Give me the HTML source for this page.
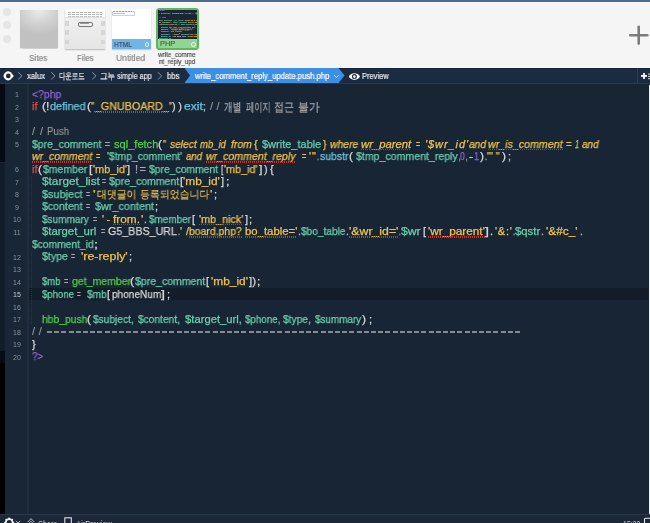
<!DOCTYPE html>
<html lang="ko"><head><meta charset="utf-8">
<style>
html,body{margin:0;padding:0;}
body{width:650px;height:523px;overflow:hidden;position:relative;background:#172535;font-family:"Liberation Sans",sans-serif;}
.abs{position:absolute;}
#desk{left:0;top:0;width:650px;height:2px;background:#4b6a8f;}
#tb{left:0;top:2px;width:650px;height:66px;background:#f5f5f5;}
.dot{position:absolute;left:3px;width:8px;height:8px;border-radius:50%;background:#e5e5e5;}
.lbl{position:absolute;font-size:9.5px;color:#8a8a8a;text-align:center;white-space:nowrap;}
#crumb{left:0;top:68px;width:650px;height:15px;background:#1b2b40;border-bottom:1px solid #2a3a4d;}
.cr{position:absolute;top:70px;font-size:9.5px;color:#e6e9ee;white-space:nowrap;line-height:12px;}
#editor{left:0;top:84px;width:650px;height:430px;background:#172535;}
#blk{left:0;top:84px;width:4.8px;height:430px;background:linear-gradient(180deg,#060b13 0,#060b13 77.6px,#1a2431 77.6px,#1a2431 79px,#121d2a 79px,#121d2a 267px,#070c14 267px,#070c14 279px,#000 279px);}
#gut{left:5px;top:84px;width:22px;height:430px;background:#182636;}
#gsep{left:27px;top:84px;width:2px;height:430px;background:#1f2d3e;}
.guide{position:absolute;left:31px;width:1px;background:repeating-linear-gradient(180deg,#22364c 0 1px,transparent 1px 2px);}
#hl{left:29px;top:288.2px;width:619px;height:12px;background:#121d29;}
#rstrip{left:648.5px;top:85px;width:1.5px;height:429px;background:#f2f2f2;}
#status{left:0;top:514px;width:650px;height:9px;background:#1c2838;border-top:1px solid #2a3849;}
.fit{position:absolute;line-height:1;white-space:pre;transform-origin:0 0;will-change:transform;}
.k{position:absolute;will-change:transform;font-size:11px;-webkit-text-stroke:0.25px currentColor;line-height:1;white-space:pre;transform-origin:0 0;}
.ul{position:absolute;height:1.5px;background:repeating-linear-gradient(90deg,#c8342c 0 1.2px,transparent 1.2px 2px);}
.ln{position:absolute;left:5px;width:24px;text-align:center;font-size:7px;line-height:1;}
.dash{position:absolute;top:331px;width:5px;height:1.6px;background:#868b91;}
</style></head><body>
<div id="desk" class="abs"></div>
<div id="tb" class="abs"></div>
<div class="abs" style="left:0;top:2px;width:650px;height:1px;background:#f8f8f8;"></div>
<div class="dot" style="top:8px"></div>
<div class="dot" style="top:21px"></div>
<div class="dot" style="top:34.5px"></div>
<!-- Sites -->
<div class="abs" style="left:20px;top:10px;width:38px;height:38px;background:radial-gradient(ellipse 75% 65% at 50% 0%,#ebebeb 0%,#d2d2d2 55%,#c1c1c1 100%) #c1c1c1;box-shadow:0 0.5px 1px rgba(0,0,0,0.15);"></div>
<!-- Files -->
<div class="abs" style="left:65.4px;top:9px;width:39.5px;height:39.6px;background:linear-gradient(#f3f3f3,#e5e5e5);box-shadow:0 0.6px 1.2px rgba(0,0,0,0.25);"></div>
<div class="abs" style="left:65.4px;top:9px;width:39.5px;height:8px;background:#ffffff;border-bottom:0.6px solid #e0e0e0;"></div>
<div class="abs" style="left:67.8px;top:11.8px;width:34px;height:0.9px;background:repeating-linear-gradient(90deg,#b8b8b8 0 3px,#e8e8e8 3px 4px);"></div>
<div class="abs" style="left:67.8px;top:13.9px;width:34px;height:0.9px;background:repeating-linear-gradient(90deg,#b8b8b8 0 3px,#e8e8e8 3px 4px);"></div>
<div class="abs" style="left:67.8px;top:16px;width:34px;height:0.9px;background:repeating-linear-gradient(90deg,#c4c4c4 0 3px,#ececec 3px 4px);"></div>
<div class="abs" style="left:78px;top:22px;width:12.6px;height:3.2px;border:0.7px solid #7a7a7a;border-radius:2px;background:#f0f0f0;box-shadow:0 0 1px rgba(0,0,0,0.2);"></div>
<div class="abs" style="left:80px;top:23.4px;width:9px;height:0.8px;background:#9a9a9a;"></div>
<div class="abs" style="left:65.4px;top:21.2px;width:3.7px;height:4.5px;background:#d6d6d6;"></div>
<div class="abs" style="left:65.4px;top:30.2px;width:3.7px;height:4.4px;background:#d6d6d6;"></div>
<div class="abs" style="left:65.4px;top:39.6px;width:3.7px;height:4.2px;background:#d6d6d6;"></div>
<div class="abs" style="left:101.2px;top:21.2px;width:3.7px;height:4.5px;background:#d6d6d6;"></div>
<div class="abs" style="left:101.2px;top:30.2px;width:3.7px;height:4.4px;background:#d6d6d6;"></div>
<div class="abs" style="left:101.2px;top:39.6px;width:3.7px;height:4.2px;background:#d6d6d6;"></div>
<!-- Untitled -->
<div class="abs" style="left:111.6px;top:9px;width:39.4px;height:39.6px;background:#ffffff;box-shadow:0 0.6px 1.2px rgba(0,0,0,0.2);"></div>
<div class="abs" style="left:112.2px;top:10.6px;width:21px;height:3.6px;border:0.5px solid #cfcff2;background:#fbfbff;"></div>
<div class="abs" style="left:113px;top:11.2px;width:19px;height:0.6px;background:repeating-linear-gradient(90deg,#8a8a9a 0 2px,transparent 2px 3px);opacity:0.7"></div>
<div class="abs" style="left:113px;top:12.6px;width:12px;height:0.6px;background:#9a9aaa;opacity:0.6"></div>
<div class="abs" style="left:111.6px;top:39.1px;width:39.4px;height:9.5px;background:#71b5e8;"></div>
<div class="abs" style="left:113.8px;top:40.6px;font-size:7.6px;color:#34495e;line-height:8px;transform:scaleX(0.87);transform-origin:0 0;-webkit-text-stroke:0.15px #34495e;">HTML</div>
<div class="abs" style="left:144.6px;top:42.2px;width:2.8px;height:2.8px;border:0.8px solid #e4f1fb;border-radius:50%;"></div>
<!-- PHP -->
<div class="abs" style="left:156.2px;top:7.6px;width:38.6px;height:38.6px;border:2px solid #5cb85c;border-radius:3.5px;background:#92d492;"></div>
<div class="abs" style="left:158px;top:9.5px;width:38.5px;height:29.8px;background:#1a2535;overflow:hidden;"><div style="position:absolute;left:-5.5px;top:-17px;width:650px;height:523px;transform:scale(0.187);transform-origin:0 0;"><span class="k kt" style="left:32.2px;top:88.64px;color:#8e66d8;transform:scaleX(0.9480);-webkit-text-stroke:0.6px #8e66d8;opacity:0.85;">&lt;?php</span>
<span class="k kt" style="left:32.4px;top:101.14px;color:#e8493c;transform:scaleX(1.0182);-webkit-text-stroke:0.6px #e8493c;opacity:0.85;">if</span>
<span class="k kt" style="left:41.5px;top:101.14px;color:#d8d8d8;transform:scaleX(1.1137);-webkit-text-stroke:0.6px #d8d8d8;opacity:0.85;">(!</span>
<span class="k kt" style="left:50.2px;top:101.14px;color:#6cc6df;transform:scaleX(0.9863);-webkit-text-stroke:0.6px #6cc6df;opacity:0.85;">defined</span>
<span class="k kt" style="left:87.0px;top:101.14px;color:#d8d8d8;transform:scaleX(1.0894);-webkit-text-stroke:0.6px #d8d8d8;opacity:0.85;">(</span>
<span class="k kt" style="left:90.8px;top:101.14px;color:#f0c34f;transform:scaleX(0.8192);-webkit-text-stroke:0.6px #f0c34f;opacity:0.85;">"</span>
<span class="k kt" style="left:94.5px;top:101.14px;color:#f0c34f;transform:scaleX(0.9737);-webkit-text-stroke:0.6px #f0c34f;opacity:0.85;">_GNUBOARD_</span>
<span class="k kt" style="left:169.0px;top:101.14px;color:#f0c34f;transform:scaleX(0.7680);-webkit-text-stroke:0.6px #f0c34f;opacity:0.85;">"</span>
<span class="k kt" style="left:172.0px;top:101.14px;color:#d8d8d8;letter-spacing:2.47px;-webkit-text-stroke:0.6px #d8d8d8;opacity:0.85;">))</span>
<span class="k kt" style="left:184.3px;top:101.14px;color:#6cc6df;transform:scaleX(1.0997);-webkit-text-stroke:0.6px #6cc6df;opacity:0.85;">exit;</span>
<span class="k kt" style="left:210.0px;top:101.14px;color:#9a9a9a;letter-spacing:3.38px;-webkit-text-stroke:0.6px #9a9a9a;opacity:0.85;">//</span>
<span class="k kt" style="left:223.7px;top:101.14px;color:#9a9a9a;transform:scaleX(0.7208);-webkit-text-stroke:0.6px #9a9a9a;opacity:0.85;">개별</span>
<span class="k kt" style="left:245.8px;top:101.14px;color:#9a9a9a;transform:scaleX(0.6861);-webkit-text-stroke:0.6px #9a9a9a;opacity:0.85;">페이지</span>
<span class="k kt" style="left:274.0px;top:101.14px;color:#9a9a9a;transform:scaleX(0.8333);-webkit-text-stroke:0.6px #9a9a9a;opacity:0.85;">접근</span>
<span class="k kt" style="left:298.0px;top:101.14px;color:#9a9a9a;transform:scaleX(0.9042);-webkit-text-stroke:0.6px #9a9a9a;opacity:0.85;">불가</span>
<span class="k kt" style="left:31.7px;top:126.14px;color:#9a9a9a;letter-spacing:4.97px;-webkit-text-stroke:0.6px #9a9a9a;opacity:0.85;">//</span>
<span class="k kt" style="left:46.5px;top:126.14px;color:#9a9a9a;transform:scaleX(0.8812);-webkit-text-stroke:0.6px #9a9a9a;opacity:0.85;">Push</span>
<span class="k kt" style="left:31.7px;top:138.64px;color:#6ccfae;transform:scaleX(0.9472);-webkit-text-stroke:0.6px #6ccfae;opacity:0.85;">$pre_comment</span>
<span class="k kt" style="left:104.9px;top:138.64px;color:#a9abb8;transform:scaleX(0.7922);-webkit-text-stroke:0.6px #a9abb8;opacity:0.85;">=</span>
<span class="k kt" style="left:113.5px;top:138.64px;color:#52cf4a;transform:scaleX(1.0061);-webkit-text-stroke:0.6px #52cf4a;opacity:0.85;">sql_fetch</span>
<span class="k kt" style="left:158.0px;top:138.64px;color:#d8d8d8;transform:scaleX(1.0894);-webkit-text-stroke:0.6px #d8d8d8;opacity:0.85;">(</span>
<span class="k kt" style="left:162.8px;top:138.64px;color:#f0c34f;transform:scaleX(0.8192);-webkit-text-stroke:0.6px #f0c34f;opacity:0.85;">"</span>
<span class="k kt" style="left:170.0px;top:138.64px;color:#f0c34f;transform:scaleX(0.9287);font-style:italic;-webkit-text-stroke:0.6px #f0c34f;opacity:0.85;">select</span>
<span class="k kt" style="left:199.7px;top:138.64px;color:#f0c34f;transform:scaleX(0.8609);font-style:italic;-webkit-text-stroke:0.6px #f0c34f;opacity:0.85;">mb_id</span>
<span class="k kt" style="left:230.5px;top:138.64px;color:#f0c34f;transform:scaleX(0.9500);font-style:italic;-webkit-text-stroke:0.6px #f0c34f;opacity:0.85;">from</span>
<span class="k kt" style="left:254.4px;top:138.64px;color:#f0c34f;transform:scaleX(0.9763);-webkit-text-stroke:0.6px #f0c34f;opacity:0.85;">{</span>
<span class="k kt" style="left:262.3px;top:138.64px;color:#6ccfae;transform:scaleX(0.9962);-webkit-text-stroke:0.6px #6ccfae;opacity:0.85;">$write_table</span>
<span class="k kt" style="left:322.6px;top:138.64px;color:#f0c34f;transform:scaleX(0.9220);-webkit-text-stroke:0.6px #f0c34f;opacity:0.85;">}</span>
<span class="k kt" style="left:330.0px;top:138.64px;color:#f0c34f;transform:scaleX(0.9443);font-style:italic;-webkit-text-stroke:0.6px #f0c34f;opacity:0.85;">where</span>
<span class="k kt" style="left:360.8px;top:138.64px;color:#f0c34f;transform:scaleX(1.0261);font-style:italic;-webkit-text-stroke:0.6px #f0c34f;opacity:0.85;">wr_parent</span>
<span class="k kt" style="left:416.0px;top:138.64px;color:#f0c34f;transform:scaleX(0.6214);-webkit-text-stroke:0.6px #f0c34f;opacity:0.85;">=</span>
<span class="k kt" style="left:424.6px;top:138.64px;color:#f0c34f;letter-spacing:0.93px;font-style:italic;-webkit-text-stroke:0.6px #f0c34f;opacity:0.85;">'$wr_id'</span>
<span class="k kt" style="left:469.0px;top:138.64px;color:#f0c34f;transform:scaleX(0.9260);font-style:italic;-webkit-text-stroke:0.6px #f0c34f;opacity:0.85;">and</span>
<span class="k kt" style="left:488.0px;top:138.64px;color:#f0c34f;transform:scaleX(0.9684);font-style:italic;-webkit-text-stroke:0.6px #f0c34f;opacity:0.85;">wr_is_comment</span>
<span class="k kt" style="left:566.0px;top:138.64px;color:#f0c34f;transform:scaleX(0.9320);-webkit-text-stroke:0.6px #f0c34f;opacity:0.85;">=</span>
<span class="k kt" style="left:575.0px;top:138.64px;color:#f0c34f;transform:scaleX(0.6531);font-style:italic;-webkit-text-stroke:0.6px #f0c34f;opacity:0.85;">1</span>
<span class="k kt" style="left:581.6px;top:138.64px;color:#f0c34f;transform:scaleX(0.9096);font-style:italic;-webkit-text-stroke:0.6px #f0c34f;opacity:0.85;">and</span>
<span class="k kt" style="left:31.7px;top:151.14px;color:#f0c34f;transform:scaleX(0.9576);font-style:italic;-webkit-text-stroke:0.6px #f0c34f;opacity:0.85;">wr_comment</span>
<span class="k kt" style="left:95.7px;top:151.14px;color:#f0c34f;transform:scaleX(0.6680);-webkit-text-stroke:0.6px #f0c34f;opacity:0.85;">=</span>
<span class="k kt" style="left:107.4px;top:151.14px;color:#6ccfae;transform:scaleX(0.9386);-webkit-text-stroke:0.6px #6ccfae;opacity:0.85;">'$tmp_comment'</span>
<span class="k kt" style="left:186.0px;top:151.14px;color:#f0c34f;transform:scaleX(0.8715);font-style:italic;-webkit-text-stroke:0.6px #f0c34f;opacity:0.85;">and</span>
<span class="k kt" style="left:206.0px;top:151.14px;color:#f0c34f;transform:scaleX(0.9632);font-style:italic;-webkit-text-stroke:0.6px #f0c34f;opacity:0.85;">wr_comment_reply</span>
<span class="k kt" style="left:301.7px;top:151.14px;color:#f0c34f;transform:scaleX(0.6680);-webkit-text-stroke:0.6px #f0c34f;opacity:0.85;">=</span>
<span class="k kt" style="left:309.0px;top:151.14px;color:#f0c34f;letter-spacing:0.98px;-webkit-text-stroke:0.6px #f0c34f;opacity:0.85;">'"</span>
<span class="k kt" style="left:317.0px;top:151.14px;color:#d8d8d8;transform:scaleX(0.6531);-webkit-text-stroke:0.6px #d8d8d8;opacity:0.85;">.</span>
<span class="k kt" style="left:320.0px;top:151.14px;color:#6cc6df;transform:scaleX(0.9510);-webkit-text-stroke:0.6px #6cc6df;opacity:0.85;">substr</span>
<span class="k kt" style="left:349.0px;top:151.14px;color:#d8d8d8;transform:scaleX(1.0894);-webkit-text-stroke:0.6px #d8d8d8;opacity:0.85;">(</span>
<span class="k kt" style="left:356.0px;top:151.14px;color:#6ccfae;transform:scaleX(0.9624);-webkit-text-stroke:0.6px #6ccfae;opacity:0.85;">$tmp_comment_reply</span>
<span class="k kt" style="left:458.5px;top:151.14px;color:#d8d8d8;transform:scaleX(0.4898);-webkit-text-stroke:0.6px #d8d8d8;opacity:0.85;">,</span>
<span class="k kt" style="left:460.3px;top:151.14px;color:#8e66d8;transform:scaleX(0.7673);-webkit-text-stroke:0.6px #8e66d8;opacity:0.85;">0</span>
<span class="k kt" style="left:465.5px;top:151.14px;color:#d8d8d8;transform:scaleX(0.4898);-webkit-text-stroke:0.6px #d8d8d8;opacity:0.85;">,</span>
<span class="k kt" style="left:469.0px;top:151.14px;color:#d8d8d8;transform:scaleX(1.0894);-webkit-text-stroke:0.6px #d8d8d8;opacity:0.85;">-</span>
<span class="k kt" style="left:473.8px;top:151.14px;color:#8e66d8;transform:scaleX(0.8163);-webkit-text-stroke:0.6px #8e66d8;opacity:0.85;">1</span>
<span class="k kt" style="left:480.0px;top:151.14px;color:#d8d8d8;transform:scaleX(1.0894);-webkit-text-stroke:0.6px #d8d8d8;opacity:0.85;">)</span>
<span class="k kt" style="left:485.0px;top:151.14px;color:#d8d8d8;transform:scaleX(0.6531);-webkit-text-stroke:0.6px #d8d8d8;opacity:0.85;">.</span>
<span class="k kt" style="left:487.4px;top:151.14px;color:#f0c34f;transform:scaleX(0.9716);-webkit-text-stroke:0.6px #f0c34f;opacity:0.85;">"' "</span>
<span class="k kt" style="left:502.0px;top:151.14px;color:#d8d8d8;transform:scaleX(1.0894);-webkit-text-stroke:0.6px #d8d8d8;opacity:0.85;">)</span>
<span class="k kt" style="left:508.3px;top:151.14px;color:#d8d8d8;transform:scaleX(0.8816);-webkit-text-stroke:0.6px #d8d8d8;opacity:0.85;">;</span>
<span class="k kt" style="left:32.4px;top:163.64px;color:#e8493c;transform:scaleX(1.0182);-webkit-text-stroke:0.6px #e8493c;opacity:0.85;">if</span>
<span class="k kt" style="left:38.0px;top:163.64px;color:#d8d8d8;transform:scaleX(1.0894);-webkit-text-stroke:0.6px #d8d8d8;opacity:0.85;">(</span>
<span class="k kt" style="left:42.8px;top:163.64px;color:#6ccfae;transform:scaleX(0.9512);-webkit-text-stroke:0.6px #6ccfae;opacity:0.85;">$member</span>
<span class="k kt" style="left:88.5px;top:163.64px;color:#d8d8d8;transform:scaleX(1.1429);-webkit-text-stroke:0.6px #d8d8d8;opacity:0.85;">[</span>
<span class="k kt" style="left:92.5px;top:163.64px;color:#f0c34f;transform:scaleX(0.9950);-webkit-text-stroke:0.6px #f0c34f;opacity:0.85;">'mb_id'</span>
<span class="k kt" style="left:127.0px;top:163.64px;color:#d8d8d8;transform:scaleX(0.9796);-webkit-text-stroke:0.6px #d8d8d8;opacity:0.85;">]</span>
<span class="k kt" style="left:134.5px;top:163.64px;color:#a9abb8;letter-spacing:1.52px;-webkit-text-stroke:0.6px #a9abb8;opacity:0.85;">!=</span>
<span class="k kt" style="left:149.0px;top:163.64px;color:#6ccfae;transform:scaleX(0.9404);-webkit-text-stroke:0.6px #6ccfae;opacity:0.85;">$pre_comment</span>
<span class="k kt" style="left:220.6px;top:163.64px;color:#d8d8d8;transform:scaleX(0.7837);-webkit-text-stroke:0.6px #d8d8d8;opacity:0.85;">[</span>
<span class="k kt" style="left:224.0px;top:163.64px;color:#f0c34f;transform:scaleX(0.9803);-webkit-text-stroke:0.6px #f0c34f;opacity:0.85;">'mb_id'</span>
<span class="k kt" style="left:258.5px;top:163.64px;color:#d8d8d8;transform:scaleX(1.1429);-webkit-text-stroke:0.6px #d8d8d8;opacity:0.85;">]</span>
<span class="k kt" style="left:263.5px;top:163.64px;color:#d8d8d8;transform:scaleX(0.9532);-webkit-text-stroke:0.6px #d8d8d8;opacity:0.85;">)</span>
<span class="k kt" style="left:269.7px;top:163.64px;color:#d8d8d8;transform:scaleX(1.0034);-webkit-text-stroke:0.6px #d8d8d8;opacity:0.85;">{</span>
<span class="k kt" style="left:41.5px;top:176.14px;color:#6ccfae;transform:scaleX(1.0760);-webkit-text-stroke:0.6px #6ccfae;opacity:0.85;">$target_list</span>
<span class="k kt" style="left:102.0px;top:176.14px;color:#a9abb8;transform:scaleX(0.6214);-webkit-text-stroke:0.6px #a9abb8;opacity:0.85;">=</span>
<span class="k kt" style="left:109.3px;top:176.14px;color:#6ccfae;transform:scaleX(0.9567);-webkit-text-stroke:0.6px #6ccfae;opacity:0.85;">$pre_comment</span>
<span class="k kt" style="left:179.7px;top:176.14px;color:#d8d8d8;transform:scaleX(1.0776);-webkit-text-stroke:0.6px #d8d8d8;opacity:0.85;">[</span>
<span class="k kt" style="left:183.4px;top:176.14px;color:#f0c34f;transform:scaleX(1.0798);-webkit-text-stroke:0.6px #f0c34f;opacity:0.85;">'mb_id'</span>
<span class="k kt" style="left:221.0px;top:176.14px;color:#d8d8d8;transform:scaleX(0.9796);-webkit-text-stroke:0.6px #d8d8d8;opacity:0.85;">]</span>
<span class="k kt" style="left:225.5px;top:176.14px;color:#d8d8d8;transform:scaleX(1.1429);-webkit-text-stroke:0.6px #d8d8d8;opacity:0.85;">;</span>
<span class="k kt" style="left:41.5px;top:188.64px;color:#6ccfae;transform:scaleX(0.9882);-webkit-text-stroke:0.6px #6ccfae;opacity:0.85;">$subject</span>
<span class="k kt" style="left:86.0px;top:188.64px;color:#a9abb8;transform:scaleX(0.6214);-webkit-text-stroke:0.6px #a9abb8;opacity:0.85;">=</span>
<span class="k kt" style="left:93.3px;top:188.64px;color:#f0c34f;transform:scaleX(1.2800);-webkit-text-stroke:0.6px #f0c34f;opacity:0.85;">'</span>
<span class="k kt" style="left:97.0px;top:188.64px;color:#f0c34f;transform:scaleX(0.8955);-webkit-text-stroke:0.6px #f0c34f;opacity:0.85;">대댓글이</span>
<span class="k kt" style="left:140.0px;top:188.64px;color:#f0c34f;transform:scaleX(0.9000);-webkit-text-stroke:0.6px #f0c34f;opacity:0.85;">등록되었습니다</span>
<span class="k kt" style="left:210.0px;top:188.64px;color:#f0c34f;transform:scaleX(1.1852);-webkit-text-stroke:0.6px #f0c34f;opacity:0.85;">'</span>
<span class="k kt" style="left:214.0px;top:188.64px;color:#d8d8d8;transform:scaleX(0.9796);-webkit-text-stroke:0.6px #d8d8d8;opacity:0.85;">;</span>
<span class="k kt" style="left:41.5px;top:201.14px;color:#6ccfae;transform:scaleX(0.9596);-webkit-text-stroke:0.6px #6ccfae;opacity:0.85;">$content</span>
<span class="k kt" style="left:86.0px;top:201.14px;color:#a9abb8;transform:scaleX(0.6214);-webkit-text-stroke:0.6px #a9abb8;opacity:0.85;">=</span>
<span class="k kt" style="left:94.5px;top:201.14px;color:#6ccfae;transform:scaleX(0.9860);-webkit-text-stroke:0.6px #6ccfae;opacity:0.85;">$wr_content</span>
<span class="k kt" style="left:155.0px;top:201.14px;color:#d8d8d8;transform:scaleX(0.9796);-webkit-text-stroke:0.6px #d8d8d8;opacity:0.85;">;</span>
<span class="k kt" style="left:41.5px;top:213.64px;color:#6ccfae;transform:scaleX(0.9115);-webkit-text-stroke:0.6px #6ccfae;opacity:0.85;">$summary</span>
<span class="k kt" style="left:92.5px;top:213.64px;color:#a9abb8;transform:scaleX(0.6680);-webkit-text-stroke:0.6px #a9abb8;opacity:0.85;">=</span>
<span class="k kt" style="left:101.9px;top:213.64px;color:#f0c34f;letter-spacing:2.33px;-webkit-text-stroke:0.6px #f0c34f;opacity:0.85;">'-</span>
<span class="k kt" style="left:113.0px;top:213.64px;color:#f0c34f;transform:scaleX(1.0773);-webkit-text-stroke:0.6px #f0c34f;opacity:0.85;">from.</span>
<span class="k kt" style="left:140.5px;top:213.64px;color:#f0c34f;transform:scaleX(1.1852);-webkit-text-stroke:0.6px #f0c34f;opacity:0.85;">'</span>
<span class="k kt" style="left:144.0px;top:213.64px;color:#d8d8d8;transform:scaleX(0.8163);-webkit-text-stroke:0.6px #d8d8d8;opacity:0.85;">.</span>
<span class="k kt" style="left:148.6px;top:213.64px;color:#6ccfae;transform:scaleX(0.9017);-webkit-text-stroke:0.6px #6ccfae;opacity:0.85;">$member</span>
<span class="k kt" style="left:192.0px;top:213.64px;color:#d8d8d8;transform:scaleX(0.9796);-webkit-text-stroke:0.6px #d8d8d8;opacity:0.85;">[</span>
<span class="k kt" style="left:199.0px;top:213.64px;color:#f0c34f;transform:scaleX(0.9829);-webkit-text-stroke:0.6px #f0c34f;opacity:0.85;">'mb_nick'</span>
<span class="k kt" style="left:245.0px;top:213.64px;color:#d8d8d8;transform:scaleX(0.9796);-webkit-text-stroke:0.6px #d8d8d8;opacity:0.85;">]</span>
<span class="k kt" style="left:248.9px;top:213.64px;color:#d8d8d8;transform:scaleX(1.0122);-webkit-text-stroke:0.6px #d8d8d8;opacity:0.85;">;</span>
<span class="k kt" style="left:41.5px;top:226.14px;color:#6ccfae;transform:scaleX(1.0305);-webkit-text-stroke:0.6px #6ccfae;opacity:0.85;">$target_url</span>
<span class="k kt" style="left:100.6px;top:226.14px;color:#a9abb8;transform:scaleX(0.6835);-webkit-text-stroke:0.6px #a9abb8;opacity:0.85;">=</span>
<span class="k kt" style="left:108.0px;top:226.14px;color:#d8d8d8;transform:scaleX(0.9727);-webkit-text-stroke:0.6px #d8d8d8;opacity:0.85;">G5_BBS_URL</span>
<span class="k kt" style="left:177.5px;top:226.14px;color:#d8d8d8;transform:scaleX(0.6531);-webkit-text-stroke:0.6px #d8d8d8;opacity:0.85;">.</span>
<span class="k kt" style="left:180.0px;top:226.14px;color:#f0c34f;letter-spacing:3.84px;-webkit-text-stroke:0.6px #f0c34f;opacity:0.85;">'/</span>
<span class="k kt" style="left:189.2px;top:226.14px;color:#f0c34f;transform:scaleX(0.9484);-webkit-text-stroke:0.6px #f0c34f;opacity:0.85;">board.php?</span>
<span class="k kt" style="left:244.6px;top:226.14px;color:#f0c34f;transform:scaleX(1.0328);-webkit-text-stroke:0.6px #f0c34f;opacity:0.85;">bo_table='</span>
<span class="k kt" style="left:297.5px;top:226.14px;color:#d8d8d8;transform:scaleX(0.8163);-webkit-text-stroke:0.6px #d8d8d8;opacity:0.85;">.</span>
<span class="k kt" style="left:301.0px;top:226.14px;color:#6ccfae;transform:scaleX(0.9187);-webkit-text-stroke:0.6px #6ccfae;opacity:0.85;">$bo_table</span>
<span class="k kt" style="left:346.0px;top:226.14px;color:#d8d8d8;transform:scaleX(0.8163);-webkit-text-stroke:0.6px #d8d8d8;opacity:0.85;">.</span>
<span class="k kt" style="left:349.0px;top:226.14px;color:#f0c34f;transform:scaleX(1.1164);-webkit-text-stroke:0.6px #f0c34f;opacity:0.85;">'&amp;wr_id='</span>
<span class="k kt" style="left:398.8px;top:226.14px;color:#d8d8d8;transform:scaleX(0.5551);-webkit-text-stroke:0.6px #d8d8d8;opacity:0.85;">.</span>
<span class="k kt" style="left:400.8px;top:226.14px;color:#6ccfae;transform:scaleX(1.1108);-webkit-text-stroke:0.6px #6ccfae;opacity:0.85;">$wr</span>
<span class="k kt" style="left:423.0px;top:226.14px;color:#d8d8d8;transform:scaleX(0.9796);-webkit-text-stroke:0.6px #d8d8d8;opacity:0.85;">[</span>
<span class="k kt" style="left:427.7px;top:226.14px;color:#f0c34f;transform:scaleX(1.0711);-webkit-text-stroke:0.6px #f0c34f;opacity:0.85;">'wr_parent'</span>
<span class="k kt" style="left:485.0px;top:226.14px;color:#d8d8d8;transform:scaleX(1.3061);-webkit-text-stroke:0.6px #d8d8d8;opacity:0.85;">]</span>
<span class="k kt" style="left:490.0px;top:226.14px;color:#d8d8d8;transform:scaleX(0.9796);-webkit-text-stroke:0.6px #d8d8d8;opacity:0.85;">.</span>
<span class="k kt" style="left:495.4px;top:226.14px;color:#f0c34f;letter-spacing:0.77px;-webkit-text-stroke:0.6px #f0c34f;opacity:0.85;">'&amp;:'</span>
<span class="k kt" style="left:512.5px;top:226.14px;color:#d8d8d8;transform:scaleX(0.6531);-webkit-text-stroke:0.6px #d8d8d8;opacity:0.85;">.</span>
<span class="k kt" style="left:514.8px;top:226.14px;color:#6ccfae;transform:scaleX(1.0299);-webkit-text-stroke:0.6px #6ccfae;opacity:0.85;">$qstr</span>
<span class="k kt" style="left:540.5px;top:226.14px;color:#d8d8d8;transform:scaleX(0.8163);-webkit-text-stroke:0.6px #d8d8d8;opacity:0.85;">.</span>
<span class="k kt" style="left:545.5px;top:226.14px;color:#f0c34f;transform:scaleX(1.0758);-webkit-text-stroke:0.6px #f0c34f;opacity:0.85;">'&amp;#c_'</span>
<span class="k kt" style="left:579.5px;top:226.14px;color:#d8d8d8;transform:scaleX(0.8163);-webkit-text-stroke:0.6px #d8d8d8;opacity:0.85;">.</span>
<span class="k kt" style="left:31.7px;top:238.64px;color:#6ccfae;transform:scaleX(0.9327);-webkit-text-stroke:0.6px #6ccfae;opacity:0.85;">$comment_id</span>
<span class="k kt" style="left:94.0px;top:238.64px;color:#d8d8d8;transform:scaleX(1.3061);-webkit-text-stroke:0.6px #d8d8d8;opacity:0.85;">;</span>
<span class="k kt" style="left:41.5px;top:251.15px;color:#6ccfae;transform:scaleX(0.9620);-webkit-text-stroke:0.6px #6ccfae;opacity:0.85;">$type</span>
<span class="k kt" style="left:71.0px;top:251.15px;color:#a9abb8;transform:scaleX(0.6214);-webkit-text-stroke:0.6px #a9abb8;opacity:0.85;">=</span>
<span class="k kt" style="left:81.0px;top:251.15px;color:#f0c34f;transform:scaleX(1.1253);-webkit-text-stroke:0.6px #f0c34f;opacity:0.85;">'re-reply'</span>
<span class="k kt" style="left:129.0px;top:251.15px;color:#d8d8d8;transform:scaleX(0.9796);-webkit-text-stroke:0.6px #d8d8d8;opacity:0.85;">;</span>
<span class="k kt" style="left:41.5px;top:276.15px;color:#6ccfae;transform:scaleX(0.8642);-webkit-text-stroke:0.6px #6ccfae;opacity:0.85;">$mb</span>
<span class="k kt" style="left:63.7px;top:276.15px;color:#a9abb8;transform:scaleX(0.6680);-webkit-text-stroke:0.6px #a9abb8;opacity:0.85;">=</span>
<span class="k kt" style="left:72.3px;top:276.15px;color:#52cf4a;transform:scaleX(0.9568);-webkit-text-stroke:0.6px #52cf4a;opacity:0.85;">get_member</span>
<span class="k kt" style="left:129.8px;top:276.15px;color:#d8d8d8;transform:scaleX(1.1438);-webkit-text-stroke:0.6px #d8d8d8;opacity:0.85;">(</span>
<span class="k kt" style="left:134.8px;top:276.15px;color:#6ccfae;transform:scaleX(0.9567);-webkit-text-stroke:0.6px #6ccfae;opacity:0.85;">$pre_comment</span>
<span class="k kt" style="left:206.0px;top:276.15px;color:#d8d8d8;transform:scaleX(0.9796);-webkit-text-stroke:0.6px #d8d8d8;opacity:0.85;">[</span>
<span class="k kt" style="left:211.0px;top:276.15px;color:#f0c34f;transform:scaleX(1.0828);-webkit-text-stroke:0.6px #f0c34f;opacity:0.85;">'mb_id'</span>
<span class="k kt" style="left:249.0px;top:276.15px;color:#d8d8d8;transform:scaleX(1.0394);-webkit-text-stroke:0.6px #d8d8d8;opacity:0.85;">])</span>
<span class="k kt" style="left:256.7px;top:276.15px;color:#d8d8d8;transform:scaleX(1.0776);-webkit-text-stroke:0.6px #d8d8d8;opacity:0.85;">;</span>
<span class="k kt" style="left:41.5px;top:288.65px;color:#6ccfae;transform:scaleX(0.8715);-webkit-text-stroke:0.6px #6ccfae;opacity:0.85;">$phone</span>
<span class="k kt" style="left:77.2px;top:288.65px;color:#a9abb8;transform:scaleX(0.5903);-webkit-text-stroke:0.6px #a9abb8;opacity:0.85;">=</span>
<span class="k kt" style="left:87.0px;top:288.65px;color:#6ccfae;transform:scaleX(0.9250);-webkit-text-stroke:0.6px #6ccfae;opacity:0.85;">$mb</span>
<span class="k kt" style="left:107.0px;top:288.65px;color:#d8d8d8;transform:scaleX(0.9796);-webkit-text-stroke:0.6px #d8d8d8;opacity:0.85;">[</span>
<span class="k kt" style="left:111.7px;top:288.65px;color:#d8d8d8;transform:scaleX(0.9159);-webkit-text-stroke:0.6px #d8d8d8;opacity:0.85;">phoneNum</span>
<span class="k kt" style="left:161.0px;top:288.65px;color:#d8d8d8;transform:scaleX(1.3061);-webkit-text-stroke:0.6px #d8d8d8;opacity:0.85;">]</span>
<span class="k kt" style="left:167.0px;top:288.65px;color:#d8d8d8;transform:scaleX(0.9796);-webkit-text-stroke:0.6px #d8d8d8;opacity:0.85;">;</span>
<span class="k kt" style="left:41.5px;top:313.65px;color:#52cf4a;transform:scaleX(0.9415);-webkit-text-stroke:0.6px #52cf4a;opacity:0.85;">hbb_push</span>
<span class="k kt" style="left:87.0px;top:313.65px;color:#d8d8d8;transform:scaleX(1.0894);-webkit-text-stroke:0.6px #d8d8d8;opacity:0.85;">(</span>
<span class="k kt" style="left:93.3px;top:313.65px;color:#6ccfae;transform:scaleX(0.9243);-webkit-text-stroke:0.6px #6ccfae;opacity:0.85;">$subject,</span>
<span class="k kt" style="left:137.6px;top:313.65px;color:#6ccfae;transform:scaleX(0.9256);-webkit-text-stroke:0.6px #6ccfae;opacity:0.85;">$content,</span>
<span class="k kt" style="left:184.6px;top:313.65px;color:#6ccfae;transform:scaleX(1.0223);-webkit-text-stroke:0.6px #6ccfae;opacity:0.85;">$target_url,</span>
<span class="k kt" style="left:244.6px;top:313.65px;color:#6ccfae;transform:scaleX(0.8902);-webkit-text-stroke:0.6px #6ccfae;opacity:0.85;">$phone,</span>
<span class="k kt" style="left:283.0px;top:313.65px;color:#6ccfae;transform:scaleX(0.9276);-webkit-text-stroke:0.6px #6ccfae;opacity:0.85;">$type,</span>
<span class="k kt" style="left:315.4px;top:313.65px;color:#6ccfae;transform:scaleX(0.8979);-webkit-text-stroke:0.6px #6ccfae;opacity:0.85;">$summary</span>
<span class="k kt" style="left:362.0px;top:313.65px;color:#d8d8d8;transform:scaleX(1.0894);-webkit-text-stroke:0.6px #d8d8d8;opacity:0.85;">)</span>
<span class="k kt" style="left:369.0px;top:313.65px;color:#d8d8d8;transform:scaleX(0.9796);-webkit-text-stroke:0.6px #d8d8d8;opacity:0.85;">;</span>
<span class="k kt" style="left:31.7px;top:326.15px;color:#9a9a9a;letter-spacing:3.68px;-webkit-text-stroke:0.6px #9a9a9a;opacity:0.85;">//</span>
<span class="k kt" style="left:31.7px;top:338.65px;color:#d8d8d8;transform:scaleX(1.0034);-webkit-text-stroke:0.6px #d8d8d8;opacity:0.85;">}</span>
<span class="k kt" style="left:31.7px;top:351.15px;color:#8e66d8;transform:scaleX(0.8847);-webkit-text-stroke:0.6px #8e66d8;opacity:0.85;">?&gt;</span></div></div>
<div class="abs" style="left:159.7px;top:40.3px;font-size:7.8px;color:#42603f;line-height:8px;transform:scaleX(0.95);transform-origin:0 0;-webkit-text-stroke:0.15px #42603f;">PHP</div>
<div class="abs" style="left:191px;top:42.3px;width:2.8px;height:2.8px;border:0.8px solid #f0faf0;border-radius:50%;"></div>
<!-- plus -->
<svg class="abs" style="left:620px;top:18px" width="30" height="32" viewBox="620 18 30 32"><g stroke="#7b7b7b" stroke-width="2.6" stroke-linecap="round"><line x1="630.3" y1="35.3" x2="647.3" y2="35.3"/><line x1="638.7" y1="26.8" x2="638.7" y2="43.6"/></g></svg>

<!-- breadcrumb -->
<div id="crumb" class="abs"></div>
<div class="abs" style="left:0;top:66px;width:650px;height:1.6px;background:#f6f6f6;"></div>
<div class="abs" style="left:0;top:68px;width:650px;height:1px;background:#16223a;opacity:0.9"></div>
<div class="abs" style="left:184.5px;top:68px;width:160px;height:15px;background:#3d8fe3;clip-path:polygon(0 0,154px 0,160px 7.5px,154px 15px,0 15px,5.5px 7.5px);"></div>
<span class="fit" style="left:26.8px;top:71.50px;font-size:8.6px;color:#e8ebef;-webkit-text-stroke:0.2px #e8ebef;transform:scaleX(0.9022);">xalux</span>
<span class="fit" style="left:59.4px;top:71.50px;font-size:8.6px;color:#e8ebef;-webkit-text-stroke:0.2px #e8ebef;transform:scaleX(0.7111);">다운로드</span>
<span class="fit" style="left:99.7px;top:71.50px;font-size:8.6px;color:#e8ebef;-webkit-text-stroke:0.2px #e8ebef;transform:scaleX(0.8329);">그누 simple app</span>
<span class="fit" style="left:167.0px;top:71.50px;font-size:8.6px;color:#e8ebef;-webkit-text-stroke:0.2px #e8ebef;transform:scaleX(0.9019);">bbs</span>
<span class="fit" style="left:194.7px;top:71.50px;font-size:8.6px;color:#ffffff;-webkit-text-stroke:0.2px #fff;transform:scaleX(0.8925);">write_comment_reply_update.push.php</span>
<span class="fit" style="left:362.4px;top:71.50px;font-size:8.6px;color:#e8ebef;-webkit-text-stroke:0.2px #e8ebef;transform:scaleX(0.8764);">Preview</span>
<span class="fit" style="left:37.6px;top:519.60px;font-size:9px;color:#c8ccd2;transform:scaleX(0.8073);">Share</span>
<span class="fit" style="left:76.0px;top:519.60px;font-size:9px;color:#c8ccd2;transform:scaleX(0.8369);">AirPreview</span>
<span class="fit" style="left:622.5px;top:519.60px;font-size:9px;color:#c8ccd2;transform:scaleX(0.7634);">15:20</span>
<span class="fit" style="left:29.0px;top:52.50px;font-size:9.5px;color:#858585;-webkit-text-stroke:0.15px #858585;transform:scaleX(0.8710);">Sites</span>
<span class="fit" style="left:76.7px;top:52.50px;font-size:9.5px;color:#858585;-webkit-text-stroke:0.15px #858585;transform:scaleX(0.8274);">Files</span>
<span class="fit" style="left:116.3px;top:52.50px;font-size:9.5px;color:#858585;-webkit-text-stroke:0.15px #858585;transform:scaleX(0.9032);">Untitled</span>
<span class="fit" style="left:158.4px;top:50.80px;font-size:7.2px;color:#444444;-webkit-text-stroke:0.15px #444;transform:scaleX(0.8795);">write_comme</span>
<span class="fit" style="left:159.0px;top:57.60px;font-size:7.2px;color:#444444;-webkit-text-stroke:0.15px #444;transform:scaleX(0.8734);">nt_reply_upd</span>
<svg class="abs" style="left:0;top:62px" width="650" height="28" viewBox="0 62 650 28">
<path d="M13.9,75.9 L10.6,72.2 A4.45,4.45 0 1 0 10.6,79.6 Z" fill="#ffffff"/>
<circle cx="8.3" cy="75.9" r="2.35" fill="#1b2b40"/>
<path d="M18.3,72.3 L21.9,75.9 L18.3,79.5" stroke="#8d97a3" stroke-width="1" fill="none"/>
<path d="M51.3,72.3 L54.9,75.9 L51.3,79.5" stroke="#8d97a3" stroke-width="1" fill="none"/>
<path d="M92.3,72.3 L95.9,75.9 L92.3,79.5" stroke="#8d97a3" stroke-width="1" fill="none"/>
<path d="M158,72.3 L161.6,75.9 L158,79.5" stroke="#8d97a3" stroke-width="1" fill="none"/>
<path d="M334,75 L336.4,77.6 L338.8,75" stroke="#cfe3f8" stroke-width="0.9" fill="none"/>
<path d="M348.8,76.6 C351,72.2 357.8,72.2 360,76.6 C357.8,81 351,81 348.8,76.6 Z" fill="#ffffff"/>
<circle cx="354.4" cy="76.6" r="2.5" fill="#1b2b40"/>
<circle cx="354.4" cy="76.6" r="1.3" fill="#ffffff"/>
<rect x="637" y="68" width="1.1" height="15" fill="#2d3d52"/>
<rect x="641" y="75" width="6" height="1.9" fill="#f2f2f2"/>
<rect x="643.05" y="73" width="1.9" height="6" fill="#f2f2f2"/>
<rect x="648" y="73.6" width="2" height="1" fill="#dddddd"/>
<rect x="648" y="75.9" width="2" height="1" fill="#dddddd"/>
<rect x="648" y="78.2" width="2" height="1" fill="#dddddd"/>
</svg>

<div id="editor" class="abs"></div>
<div id="blk" class="abs"></div>
<div id="gut" class="abs"></div>
<div id="gsep" class="abs"></div>
<div id="hl" class="abs"></div>
<div class="guide" style="top:176px;height:64px"></div>
<div class="guide" style="top:251px;height:74px"></div>
<div id="rstrip" class="abs"></div>
<span class="ln" style="top:91.06px;color:#8d939b">1</span>
<span class="ln" style="top:103.56px;color:#8d939b">2</span>
<span class="ln" style="top:116.06px;color:#8d939b">3</span>
<span class="ln" style="top:128.56px;color:#8d939b">4</span>
<span class="ln" style="top:141.06px;color:#8d939b">5</span>
<span class="ln" style="top:166.06px;color:#8d939b">6</span>
<span class="ln" style="top:178.56px;color:#8d939b">7</span>
<span class="ln" style="top:191.06px;color:#8d939b">8</span>
<span class="ln" style="top:203.56px;color:#8d939b">9</span>
<span class="ln" style="top:216.06px;color:#8d939b">10</span>
<span class="ln" style="top:228.56px;color:#8d939b">11</span>
<span class="ln" style="top:253.57px;color:#8d939b">12</span>
<span class="ln" style="top:266.07px;color:#8d939b">13</span>
<span class="ln" style="top:278.57px;color:#8d939b">14</span>
<span class="ln" style="top:291.07px;color:#c9ccd0">15</span>
<span class="ln" style="top:303.57px;color:#8d939b">16</span>
<span class="ln" style="top:316.07px;color:#8d939b">17</span>
<span class="ln" style="top:328.57px;color:#8d939b">18</span>
<span class="ln" style="top:341.07px;color:#8d939b">19</span>
<span class="ln" style="top:353.57px;color:#8d939b">20</span>
<span id="t0" class="k" style="left:32.2px;top:88.64px;color:#8e66d8;transform:scaleX(0.9480);">&lt;?php</span>
<span id="t1" class="k" style="left:32.4px;top:101.14px;color:#e8493c;transform:scaleX(1.0182);">if</span>
<span id="t2" class="k" style="left:41.5px;top:101.14px;color:#d8d8d8;transform:scaleX(1.1137);">(!</span>
<span id="t3" class="k" style="left:50.2px;top:101.14px;color:#6cc6df;transform:scaleX(0.9863);">defined</span>
<span id="t4" class="k" style="left:87.0px;top:101.14px;color:#d8d8d8;transform:scaleX(1.0894);">(</span>
<span id="t5" class="k" style="left:90.8px;top:101.14px;color:#f0c34f;transform:scaleX(0.8192);">"</span>
<span id="t6" class="k" style="left:94.5px;top:101.14px;color:#f0c34f;transform:scaleX(0.9737);">_GNUBOARD_</span>
<i class="ul" style="left:94.5px;top:111.3px;width:73.8px"></i>
<span id="t7" class="k" style="left:169.0px;top:101.14px;color:#f0c34f;transform:scaleX(0.7680);">"</span>
<span id="t8" class="k" style="left:172.0px;top:101.14px;color:#d8d8d8;letter-spacing:2.47px;">))</span>
<span id="t9" class="k" style="left:184.3px;top:101.14px;color:#6cc6df;transform:scaleX(1.0997);">exit;</span>
<span id="t10" class="k" style="left:210.0px;top:101.14px;color:#9a9a9a;letter-spacing:3.38px;-webkit-text-stroke:0.1px currentColor;">//</span>
<span id="t11" class="k" style="left:223.7px;top:101.14px;color:#9a9a9a;transform:scaleX(0.7208);-webkit-text-stroke:0.1px currentColor;font-size:12px;margin-top:-0.6px;color:#a6a6a6;-webkit-text-stroke:0.25px currentColor;">개별</span>
<span id="t12" class="k" style="left:245.8px;top:101.14px;color:#9a9a9a;transform:scaleX(0.6861);-webkit-text-stroke:0.1px currentColor;font-size:12px;margin-top:-0.6px;color:#a6a6a6;-webkit-text-stroke:0.25px currentColor;">페이지</span>
<span id="t13" class="k" style="left:274.0px;top:101.14px;color:#9a9a9a;transform:scaleX(0.8333);-webkit-text-stroke:0.1px currentColor;font-size:12px;margin-top:-0.6px;color:#a6a6a6;-webkit-text-stroke:0.25px currentColor;">접근</span>
<span id="t14" class="k" style="left:298.0px;top:101.14px;color:#9a9a9a;transform:scaleX(0.9042);-webkit-text-stroke:0.1px currentColor;font-size:12px;margin-top:-0.6px;color:#a6a6a6;-webkit-text-stroke:0.25px currentColor;">불가</span>
<span id="t15" class="k" style="left:31.7px;top:126.14px;color:#9a9a9a;letter-spacing:4.97px;-webkit-text-stroke:0.1px currentColor;">//</span>
<span id="t16" class="k" style="left:46.5px;top:126.14px;color:#9a9a9a;transform:scaleX(0.8812);-webkit-text-stroke:0.1px currentColor;">Push</span>
<span id="t17" class="k" style="left:31.7px;top:138.64px;color:#6ccfae;transform:scaleX(0.9472);">$pre_comment</span>
<span id="t18" class="k" style="left:104.9px;top:138.64px;color:#a9abb8;transform:scaleX(0.7922);">=</span>
<span id="t19" class="k" style="left:113.5px;top:138.64px;color:#52cf4a;transform:scaleX(1.0061);">sql_fetch</span>
<span id="t20" class="k" style="left:158.0px;top:138.64px;color:#d8d8d8;transform:scaleX(1.0894);">(</span>
<span id="t21" class="k" style="left:162.8px;top:138.64px;color:#f0c34f;transform:scaleX(0.8192);">"</span>
<span id="t22" class="k" style="left:170.0px;top:138.64px;color:#f0c34f;transform:scaleX(0.9287);font-style:italic;">select</span>
<span id="t23" class="k" style="left:199.7px;top:138.64px;color:#f0c34f;transform:scaleX(0.8609);font-style:italic;">mb_id</span>
<span id="t24" class="k" style="left:230.5px;top:138.64px;color:#f0c34f;transform:scaleX(0.9500);font-style:italic;">from</span>
<span id="t25" class="k" style="left:254.4px;top:138.64px;color:#f0c34f;transform:scaleX(0.9763);">{</span>
<span id="t26" class="k" style="left:262.3px;top:138.64px;color:#6ccfae;transform:scaleX(0.9962);">$write_table</span>
<span id="t27" class="k" style="left:322.6px;top:138.64px;color:#f0c34f;transform:scaleX(0.9220);">}</span>
<span id="t28" class="k" style="left:330.0px;top:138.64px;color:#f0c34f;transform:scaleX(0.9443);font-style:italic;">where</span>
<span id="t29" class="k" style="left:360.8px;top:138.64px;color:#f0c34f;transform:scaleX(1.0261);font-style:italic;">wr_parent</span>
<i class="ul" style="left:360.8px;top:148.8px;width:50.2px"></i>
<span id="t30" class="k" style="left:416.0px;top:138.64px;color:#f0c34f;transform:scaleX(0.6214);">=</span>
<span id="t31" class="k" style="left:424.6px;top:138.64px;color:#f0c34f;letter-spacing:0.93px;font-style:italic;">'$wr_id'</span>
<span id="t32" class="k" style="left:469.0px;top:138.64px;color:#f0c34f;transform:scaleX(0.9260);font-style:italic;">and</span>
<span id="t33" class="k" style="left:488.0px;top:138.64px;color:#f0c34f;transform:scaleX(0.9684);font-style:italic;">wr_is_comment</span>
<i class="ul" style="left:488.0px;top:148.8px;width:74.6px"></i>
<span id="t34" class="k" style="left:566.0px;top:138.64px;color:#f0c34f;transform:scaleX(0.9320);">=</span>
<span id="t35" class="k" style="left:575.0px;top:138.64px;color:#f0c34f;transform:scaleX(0.6531);font-style:italic;">1</span>
<span id="t36" class="k" style="left:581.6px;top:138.64px;color:#f0c34f;transform:scaleX(0.9096);font-style:italic;">and</span>
<span id="t37" class="k" style="left:31.7px;top:151.14px;color:#f0c34f;transform:scaleX(0.9576);font-style:italic;">wr_comment</span>
<i class="ul" style="left:31.7px;top:161.3px;width:60.3px"></i>
<span id="t38" class="k" style="left:95.7px;top:151.14px;color:#f0c34f;transform:scaleX(0.6680);">=</span>
<span id="t39" class="k" style="left:107.4px;top:151.14px;color:#6ccfae;transform:scaleX(0.9386);">'$tmp_comment'</span>
<span id="t40" class="k" style="left:186.0px;top:151.14px;color:#f0c34f;transform:scaleX(0.8715);font-style:italic;">and</span>
<span id="t41" class="k" style="left:206.0px;top:151.14px;color:#f0c34f;transform:scaleX(0.9632);font-style:italic;">wr_comment_reply</span>
<i class="ul" style="left:206.0px;top:161.3px;width:89.5px"></i>
<span id="t42" class="k" style="left:301.7px;top:151.14px;color:#f0c34f;transform:scaleX(0.6680);">=</span>
<span id="t43" class="k" style="left:309.0px;top:151.14px;color:#f0c34f;letter-spacing:0.98px;">'"</span>
<span id="t44" class="k" style="left:317.0px;top:151.14px;color:#d8d8d8;transform:scaleX(0.6531);">.</span>
<span id="t45" class="k" style="left:320.0px;top:151.14px;color:#6cc6df;transform:scaleX(0.9510);">substr</span>
<span id="t46" class="k" style="left:349.0px;top:151.14px;color:#d8d8d8;transform:scaleX(1.0894);">(</span>
<span id="t47" class="k" style="left:356.0px;top:151.14px;color:#6ccfae;transform:scaleX(0.9624);">$tmp_comment_reply</span>
<span id="t48" class="k" style="left:458.5px;top:151.14px;color:#d8d8d8;transform:scaleX(0.4898);">,</span>
<span id="t49" class="k" style="left:460.3px;top:151.14px;color:#8e66d8;transform:scaleX(0.7673);">0</span>
<span id="t50" class="k" style="left:465.5px;top:151.14px;color:#d8d8d8;transform:scaleX(0.4898);">,</span>
<span id="t51" class="k" style="left:469.0px;top:151.14px;color:#d8d8d8;transform:scaleX(1.0894);">-</span>
<span id="t52" class="k" style="left:473.8px;top:151.14px;color:#8e66d8;transform:scaleX(0.8163);">1</span>
<span id="t53" class="k" style="left:480.0px;top:151.14px;color:#d8d8d8;transform:scaleX(1.0894);">)</span>
<span id="t54" class="k" style="left:485.0px;top:151.14px;color:#d8d8d8;transform:scaleX(0.6531);">.</span>
<span id="t55" class="k" style="left:487.4px;top:151.14px;color:#f0c34f;transform:scaleX(0.9716);">"' "</span>
<span id="t56" class="k" style="left:502.0px;top:151.14px;color:#d8d8d8;transform:scaleX(1.0894);">)</span>
<span id="t57" class="k" style="left:508.3px;top:151.14px;color:#d8d8d8;transform:scaleX(0.8816);">;</span>
<span id="t58" class="k" style="left:32.4px;top:163.64px;color:#e8493c;transform:scaleX(1.0182);">if</span>
<span id="t59" class="k" style="left:38.0px;top:163.64px;color:#d8d8d8;transform:scaleX(1.0894);">(</span>
<span id="t60" class="k" style="left:42.8px;top:163.64px;color:#6ccfae;transform:scaleX(0.9512);">$member</span>
<span id="t61" class="k" style="left:88.5px;top:163.64px;color:#d8d8d8;transform:scaleX(1.1429);">[</span>
<span id="t62" class="k" style="left:92.5px;top:163.64px;color:#f0c34f;transform:scaleX(0.9950);">'mb_id'</span>
<span id="t63" class="k" style="left:127.0px;top:163.64px;color:#d8d8d8;transform:scaleX(0.9796);">]</span>
<span id="t64" class="k" style="left:134.5px;top:163.64px;color:#a9abb8;letter-spacing:1.52px;">!=</span>
<span id="t65" class="k" style="left:149.0px;top:163.64px;color:#6ccfae;transform:scaleX(0.9404);">$pre_comment</span>
<span id="t66" class="k" style="left:220.6px;top:163.64px;color:#d8d8d8;transform:scaleX(0.7837);">[</span>
<span id="t67" class="k" style="left:224.0px;top:163.64px;color:#f0c34f;transform:scaleX(0.9803);">'mb_id'</span>
<span id="t68" class="k" style="left:258.5px;top:163.64px;color:#d8d8d8;transform:scaleX(1.1429);">]</span>
<span id="t69" class="k" style="left:263.5px;top:163.64px;color:#d8d8d8;transform:scaleX(0.9532);">)</span>
<span id="t70" class="k" style="left:269.7px;top:163.64px;color:#d8d8d8;transform:scaleX(1.0034);">{</span>
<span id="t71" class="k" style="left:41.5px;top:176.14px;color:#6ccfae;transform:scaleX(1.0760);">$target_list</span>
<span id="t72" class="k" style="left:102.0px;top:176.14px;color:#a9abb8;transform:scaleX(0.6214);">=</span>
<span id="t73" class="k" style="left:109.3px;top:176.14px;color:#6ccfae;transform:scaleX(0.9567);">$pre_comment</span>
<span id="t74" class="k" style="left:179.7px;top:176.14px;color:#d8d8d8;transform:scaleX(1.0776);">[</span>
<span id="t75" class="k" style="left:183.4px;top:176.14px;color:#f0c34f;transform:scaleX(1.0798);">'mb_id'</span>
<span id="t76" class="k" style="left:221.0px;top:176.14px;color:#d8d8d8;transform:scaleX(0.9796);">]</span>
<span id="t77" class="k" style="left:225.5px;top:176.14px;color:#d8d8d8;transform:scaleX(1.1429);">;</span>
<span id="t78" class="k" style="left:41.5px;top:188.64px;color:#6ccfae;transform:scaleX(0.9882);">$subject</span>
<span id="t79" class="k" style="left:86.0px;top:188.64px;color:#a9abb8;transform:scaleX(0.6214);">=</span>
<span id="t80" class="k" style="left:93.3px;top:188.64px;color:#f0c34f;transform:scaleX(1.2800);">'</span>
<span id="t81" class="k" style="left:97.0px;top:188.64px;color:#f0c34f;transform:scaleX(0.8955);-webkit-text-stroke:0.1px currentColor;">대댓글이</span>
<span id="t82" class="k" style="left:140.0px;top:188.64px;color:#f0c34f;transform:scaleX(0.9000);-webkit-text-stroke:0.1px currentColor;">등록되었습니다</span>
<span id="t83" class="k" style="left:210.0px;top:188.64px;color:#f0c34f;transform:scaleX(1.1852);">'</span>
<span id="t84" class="k" style="left:214.0px;top:188.64px;color:#d8d8d8;transform:scaleX(0.9796);">;</span>
<span id="t85" class="k" style="left:41.5px;top:201.14px;color:#6ccfae;transform:scaleX(0.9596);">$content</span>
<span id="t86" class="k" style="left:86.0px;top:201.14px;color:#a9abb8;transform:scaleX(0.6214);">=</span>
<span id="t87" class="k" style="left:94.5px;top:201.14px;color:#6ccfae;transform:scaleX(0.9860);">$wr_content</span>
<span id="t88" class="k" style="left:155.0px;top:201.14px;color:#d8d8d8;transform:scaleX(0.9796);">;</span>
<span id="t89" class="k" style="left:41.5px;top:213.64px;color:#6ccfae;transform:scaleX(0.9115);">$summary</span>
<span id="t90" class="k" style="left:92.5px;top:213.64px;color:#a9abb8;transform:scaleX(0.6680);">=</span>
<span id="t91" class="k" style="left:101.9px;top:213.64px;color:#f0c34f;letter-spacing:2.33px;">'-</span>
<span id="t92" class="k" style="left:113.0px;top:213.64px;color:#f0c34f;transform:scaleX(1.0773);">from.</span>
<i class="ul" style="left:113.0px;top:223.8px;width:27.0px"></i>
<span id="t93" class="k" style="left:140.5px;top:213.64px;color:#f0c34f;transform:scaleX(1.1852);">'</span>
<span id="t94" class="k" style="left:144.0px;top:213.64px;color:#d8d8d8;transform:scaleX(0.8163);">.</span>
<span id="t95" class="k" style="left:148.6px;top:213.64px;color:#6ccfae;transform:scaleX(0.9017);">$member</span>
<span id="t96" class="k" style="left:192.0px;top:213.64px;color:#d8d8d8;transform:scaleX(0.9796);">[</span>
<span id="t97" class="k" style="left:199.0px;top:213.64px;color:#f0c34f;transform:scaleX(0.9829);">'mb_nick'</span>
<i class="ul" style="left:199.0px;top:223.8px;width:44.4px"></i>
<span id="t98" class="k" style="left:245.0px;top:213.64px;color:#d8d8d8;transform:scaleX(0.9796);">]</span>
<span id="t99" class="k" style="left:248.9px;top:213.64px;color:#d8d8d8;transform:scaleX(1.0122);">;</span>
<span id="t100" class="k" style="left:41.5px;top:226.14px;color:#6ccfae;transform:scaleX(1.0305);">$target_url</span>
<span id="t101" class="k" style="left:100.6px;top:226.14px;color:#a9abb8;transform:scaleX(0.6835);">=</span>
<span id="t102" class="k" style="left:108.0px;top:226.14px;color:#d8d8d8;transform:scaleX(0.9727);">G5_BBS_URL</span>
<span id="t103" class="k" style="left:177.5px;top:226.14px;color:#d8d8d8;transform:scaleX(0.6531);">.</span>
<span id="t104" class="k" style="left:180.0px;top:226.14px;color:#f0c34f;letter-spacing:3.84px;">'/</span>
<span id="t105" class="k" style="left:189.2px;top:226.14px;color:#f0c34f;transform:scaleX(0.9484);">board.php?</span>
<i class="ul" style="left:189.2px;top:236.3px;width:52.8px"></i>
<span id="t106" class="k" style="left:244.6px;top:226.14px;color:#f0c34f;transform:scaleX(1.0328);">bo_table='</span>
<i class="ul" style="left:244.6px;top:236.3px;width:52.4px"></i>
<span id="t107" class="k" style="left:297.5px;top:226.14px;color:#d8d8d8;transform:scaleX(0.8163);">.</span>
<span id="t108" class="k" style="left:301.0px;top:226.14px;color:#6ccfae;transform:scaleX(0.9187);">$bo_table</span>
<span id="t109" class="k" style="left:346.0px;top:226.14px;color:#d8d8d8;transform:scaleX(0.8163);">.</span>
<span id="t110" class="k" style="left:349.0px;top:226.14px;color:#f0c34f;transform:scaleX(1.1164);">'&amp;wr_id='</span>
<i class="ul" style="left:349.0px;top:236.3px;width:49.4px"></i>
<span id="t111" class="k" style="left:398.8px;top:226.14px;color:#d8d8d8;transform:scaleX(0.5551);">.</span>
<span id="t112" class="k" style="left:400.8px;top:226.14px;color:#6ccfae;transform:scaleX(1.1108);">$wr</span>
<span id="t113" class="k" style="left:423.0px;top:226.14px;color:#d8d8d8;transform:scaleX(0.9796);">[</span>
<span id="t114" class="k" style="left:427.7px;top:226.14px;color:#f0c34f;transform:scaleX(1.0711);">'wr_parent'</span>
<i class="ul" style="left:427.7px;top:236.3px;width:56.9px"></i>
<span id="t115" class="k" style="left:485.0px;top:226.14px;color:#d8d8d8;transform:scaleX(1.3061);">]</span>
<span id="t116" class="k" style="left:490.0px;top:226.14px;color:#d8d8d8;transform:scaleX(0.9796);">.</span>
<span id="t117" class="k" style="left:495.4px;top:226.14px;color:#f0c34f;letter-spacing:0.77px;">'&amp;:'</span>
<span id="t118" class="k" style="left:512.5px;top:226.14px;color:#d8d8d8;transform:scaleX(0.6531);">.</span>
<span id="t119" class="k" style="left:514.8px;top:226.14px;color:#6ccfae;transform:scaleX(1.0299);">$qstr</span>
<span id="t120" class="k" style="left:540.5px;top:226.14px;color:#d8d8d8;transform:scaleX(0.8163);">.</span>
<span id="t121" class="k" style="left:545.5px;top:226.14px;color:#f0c34f;transform:scaleX(1.0758);">'&amp;#c_'</span>
<span id="t122" class="k" style="left:579.5px;top:226.14px;color:#d8d8d8;transform:scaleX(0.8163);">.</span>
<span id="t123" class="k" style="left:31.7px;top:238.64px;color:#6ccfae;transform:scaleX(0.9327);">$comment_id</span>
<span id="t124" class="k" style="left:94.0px;top:238.64px;color:#d8d8d8;transform:scaleX(1.3061);">;</span>
<span id="t125" class="k" style="left:41.5px;top:251.15px;color:#6ccfae;transform:scaleX(0.9620);">$type</span>
<span id="t126" class="k" style="left:71.0px;top:251.15px;color:#a9abb8;transform:scaleX(0.6214);">=</span>
<span id="t127" class="k" style="left:81.0px;top:251.15px;color:#f0c34f;transform:scaleX(1.1253);">'re-reply'</span>
<span id="t128" class="k" style="left:129.0px;top:251.15px;color:#d8d8d8;transform:scaleX(0.9796);">;</span>
<span id="t129" class="k" style="left:41.5px;top:276.15px;color:#6ccfae;transform:scaleX(0.8642);">$mb</span>
<span id="t130" class="k" style="left:63.7px;top:276.15px;color:#a9abb8;transform:scaleX(0.6680);">=</span>
<span id="t131" class="k" style="left:72.3px;top:276.15px;color:#52cf4a;transform:scaleX(0.9568);">get_member</span>
<span id="t132" class="k" style="left:129.8px;top:276.15px;color:#d8d8d8;transform:scaleX(1.1438);">(</span>
<span id="t133" class="k" style="left:134.8px;top:276.15px;color:#6ccfae;transform:scaleX(0.9567);">$pre_comment</span>
<span id="t134" class="k" style="left:206.0px;top:276.15px;color:#d8d8d8;transform:scaleX(0.9796);">[</span>
<span id="t135" class="k" style="left:211.0px;top:276.15px;color:#f0c34f;transform:scaleX(1.0828);">'mb_id'</span>
<span id="t136" class="k" style="left:249.0px;top:276.15px;color:#d8d8d8;transform:scaleX(1.0394);">])</span>
<span id="t137" class="k" style="left:256.7px;top:276.15px;color:#d8d8d8;transform:scaleX(1.0776);">;</span>
<span id="t138" class="k" style="left:41.5px;top:288.65px;color:#6ccfae;transform:scaleX(0.8715);">$phone</span>
<span id="t139" class="k" style="left:77.2px;top:288.65px;color:#a9abb8;transform:scaleX(0.5903);">=</span>
<span id="t140" class="k" style="left:87.0px;top:288.65px;color:#6ccfae;transform:scaleX(0.9250);">$mb</span>
<span id="t141" class="k" style="left:107.0px;top:288.65px;color:#d8d8d8;transform:scaleX(0.9796);">[</span>
<span id="t142" class="k" style="left:111.7px;top:288.65px;color:#d8d8d8;transform:scaleX(0.9159);">phoneNum</span>
<span id="t143" class="k" style="left:161.0px;top:288.65px;color:#d8d8d8;transform:scaleX(1.3061);">]</span>
<span id="t144" class="k" style="left:167.0px;top:288.65px;color:#d8d8d8;transform:scaleX(0.9796);">;</span>
<span id="t145" class="k" style="left:41.5px;top:313.65px;color:#52cf4a;transform:scaleX(0.9415);">hbb_push</span>
<span id="t146" class="k" style="left:87.0px;top:313.65px;color:#d8d8d8;transform:scaleX(1.0894);">(</span>
<span id="t147" class="k" style="left:93.3px;top:313.65px;color:#6ccfae;transform:scaleX(0.9243);">$subject,</span>
<span id="t148" class="k" style="left:137.6px;top:313.65px;color:#6ccfae;transform:scaleX(0.9256);">$content,</span>
<span id="t149" class="k" style="left:184.6px;top:313.65px;color:#6ccfae;transform:scaleX(1.0223);">$target_url,</span>
<span id="t150" class="k" style="left:244.6px;top:313.65px;color:#6ccfae;transform:scaleX(0.8902);">$phone,</span>
<span id="t151" class="k" style="left:283.0px;top:313.65px;color:#6ccfae;transform:scaleX(0.9276);">$type,</span>
<span id="t152" class="k" style="left:315.4px;top:313.65px;color:#6ccfae;transform:scaleX(0.8979);">$summary</span>
<span id="t153" class="k" style="left:362.0px;top:313.65px;color:#d8d8d8;transform:scaleX(1.0894);">)</span>
<span id="t154" class="k" style="left:369.0px;top:313.65px;color:#d8d8d8;transform:scaleX(0.9796);">;</span>
<span id="t155" class="k" style="left:31.7px;top:326.15px;color:#9a9a9a;letter-spacing:3.68px;-webkit-text-stroke:0.1px currentColor;">//</span>
<span id="t156" class="k" style="left:31.7px;top:338.65px;color:#d8d8d8;transform:scaleX(1.0034);">}</span>
<span id="t157" class="k" style="left:31.7px;top:351.15px;color:#8e66d8;transform:scaleX(0.8847);">?&gt;</span>
<i class="dash" style="left:47.0px"></i><i class="dash" style="left:54.2px"></i><i class="dash" style="left:61.4px"></i><i class="dash" style="left:68.6px"></i><i class="dash" style="left:75.8px"></i><i class="dash" style="left:83.0px"></i><i class="dash" style="left:90.2px"></i><i class="dash" style="left:97.4px"></i><i class="dash" style="left:104.6px"></i><i class="dash" style="left:111.8px"></i><i class="dash" style="left:119.0px"></i><i class="dash" style="left:126.2px"></i><i class="dash" style="left:133.4px"></i><i class="dash" style="left:140.6px"></i><i class="dash" style="left:147.8px"></i><i class="dash" style="left:155.0px"></i><i class="dash" style="left:162.2px"></i><i class="dash" style="left:169.4px"></i><i class="dash" style="left:176.6px"></i><i class="dash" style="left:183.8px"></i><i class="dash" style="left:191.0px"></i><i class="dash" style="left:198.2px"></i><i class="dash" style="left:205.4px"></i><i class="dash" style="left:212.6px"></i><i class="dash" style="left:219.8px"></i><i class="dash" style="left:227.0px"></i><i class="dash" style="left:234.2px"></i><i class="dash" style="left:241.4px"></i><i class="dash" style="left:248.6px"></i><i class="dash" style="left:255.8px"></i><i class="dash" style="left:263.0px"></i><i class="dash" style="left:270.2px"></i><i class="dash" style="left:277.4px"></i><i class="dash" style="left:284.6px"></i><i class="dash" style="left:291.8px"></i><i class="dash" style="left:299.0px"></i><i class="dash" style="left:306.2px"></i><i class="dash" style="left:313.4px"></i><i class="dash" style="left:320.6px"></i><i class="dash" style="left:327.8px"></i><i class="dash" style="left:335.0px"></i><i class="dash" style="left:342.2px"></i><i class="dash" style="left:349.4px"></i><i class="dash" style="left:356.6px"></i><i class="dash" style="left:363.8px"></i><i class="dash" style="left:371.0px"></i><i class="dash" style="left:378.2px"></i><i class="dash" style="left:385.4px"></i><i class="dash" style="left:392.6px"></i><i class="dash" style="left:399.8px"></i><i class="dash" style="left:407.0px"></i><i class="dash" style="left:414.2px"></i><i class="dash" style="left:421.4px"></i><i class="dash" style="left:428.6px"></i><i class="dash" style="left:435.8px"></i><i class="dash" style="left:443.0px"></i><i class="dash" style="left:450.2px"></i><i class="dash" style="left:457.4px"></i><i class="dash" style="left:464.6px"></i><i class="dash" style="left:471.8px"></i><i class="dash" style="left:479.0px"></i><i class="dash" style="left:486.2px"></i><i class="dash" style="left:493.4px"></i><i class="dash" style="left:500.6px"></i><i class="dash" style="left:507.8px"></i><i class="dash" style="left:515.0px"></i>
<div id="status" class="abs"></div>
<style>#status{z-index:0}.fit{z-index:2}</style>
<svg class="abs" style="left:0;top:508px" width="650" height="15" viewBox="0 508 650 15">
<circle cx="9.2" cy="522.6" r="3.4" fill="none" stroke="#f0f0f0" stroke-width="1.8"/><g stroke="#f0f0f0" stroke-width="1.7"><line x1="12.80" y1="522.60" x2="14.20" y2="522.60"/><line x1="11.75" y1="525.15" x2="12.74" y2="526.14"/><line x1="9.20" y1="526.20" x2="9.20" y2="527.60"/><line x1="6.65" y1="525.15" x2="5.66" y2="526.14"/><line x1="5.60" y1="522.60" x2="4.20" y2="522.60"/><line x1="6.65" y1="520.05" x2="5.66" y2="519.06"/><line x1="9.20" y1="519.00" x2="9.20" y2="517.60"/><line x1="11.75" y1="520.05" x2="12.74" y2="519.06"/></g>
<path d="M15.8,521 L18,523 L20.2,521" stroke="#c8ccd2" stroke-width="0.9" fill="none"/>
<path d="M27.6,522.2 L31,518.6 L34.4,522.2 M28.9,523.4 L31,521.2 L33.1,523.4" stroke="#c8ccd2" stroke-width="0.9" fill="none" stroke-linejoin="round"/>
<rect x="64.8" y="517.8" width="6.5" height="8" fill="none" stroke="#e0e0e0" stroke-width="1.1"/>
<rect x="644.5" y="518.2" width="8" height="8" rx="1" fill="none" stroke="#e8e8e8" stroke-width="1.1"/>
</svg>
</body></html>
